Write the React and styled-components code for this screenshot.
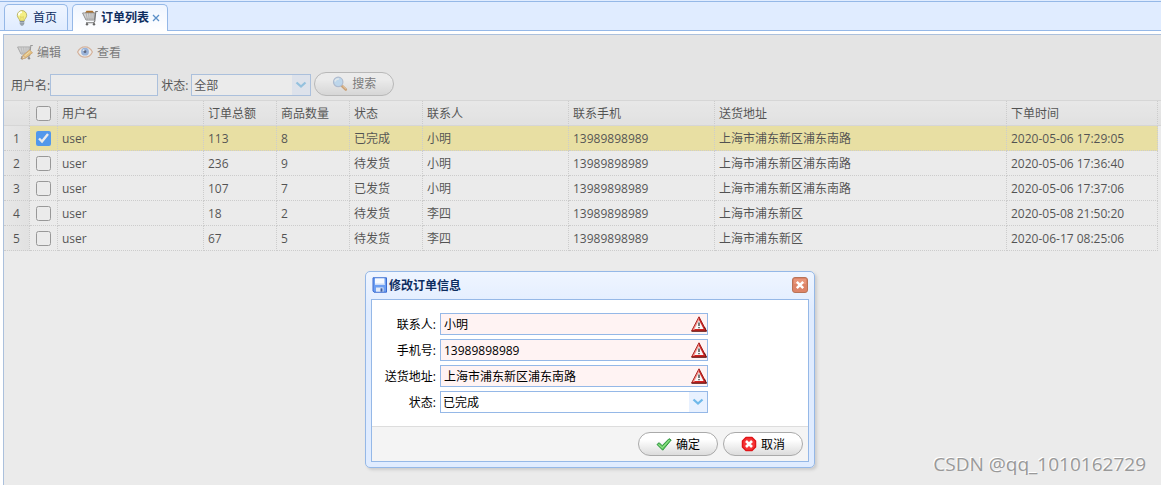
import { useState } from "react";
import styled, { createGlobalStyle, css } from "styled-components";

const orders = [
  { id: 1, user: "user", total: 113, count: 8, status: "已完成", contact: "小明", phone: "13989898989", address: "上海市浦东新区浦东南路", time: "2020-05-06 17:29:05" },
  { id: 2, user: "user", total: 236, count: 9, status: "待发货", contact: "小明", phone: "13989898989", address: "上海市浦东新区浦东南路", time: "2020-05-06 17:36:40" },
  { id: 3, user: "user", total: 107, count: 7, status: "已发货", contact: "小明", phone: "13989898989", address: "上海市浦东新区浦东南路", time: "2020-05-06 17:37:06" },
  { id: 4, user: "user", total: 18, count: 2, status: "待发货", contact: "李四", phone: "13989898989", address: "上海市浦东新区", time: "2020-05-08 21:50:20" },
  { id: 5, user: "user", total: 67, count: 5, status: "待发货", contact: "李四", phone: "13989898989", address: "上海市浦东新区", time: "2020-06-17 08:25:06" },
];

const columns = [
  { key: "user", title: "用户名", width: 146 },
  { key: "total", title: "订单总额", width: 73 },
  { key: "count", title: "商品数量", width: 73 },
  { key: "status", title: "状态", width: 73 },
  { key: "contact", title: "联系人", width: 146 },
  { key: "phone", title: "联系手机", width: 146 },
  { key: "address", title: "送货地址", width: 292 },
  { key: "time", title: "下单时间", width: 151 },
];

const statuses = ["待发货", "已发货", "已完成"];

const BulbIcon = () => (
  <Icon viewBox="0 0 16 16">
    <path d="M8 .6a4.700 4.700 0 0 0-4.700 4.700c0 2.300 2.200 3.500 2.500 5.700h4.400c.3-2.200 2.500-3.400 2.500-5.700A4.700 4.700 0 0 0 8 .6z" fill="#f4ef84" stroke="#b3ae62" strokeWidth=".9" />
    <path d="M4.800 5.500C4.800 3.500 6 2.200 8 2.200" fill="none" stroke="#fffff0" strokeWidth="1.800" />
    <path d="M7 10.500 6.600 6.500 8 7.500l1.400-1L9 10.500" fill="none" stroke="#d6c64f" strokeWidth=".6" />
    <path d="M5.800 11h4.400v3L9 15.600H7L5.800 14z" fill="#75828e" />
    <path d="M5.800 12.300h4.400M5.800 14h4" stroke="#d9e0e6" strokeWidth=".7" />
  </Icon>
);

const CartShape = () => (
  <>
    <path d="M.6 3h12.400l-.6 7H4z" fill="#eee" stroke="#8c8c8c" />
    <path d="M1.500 5h11M2.500 7h10M3.300 8.700h9M4 3l1.500 7M6.500 3l.8 7M9 3v7M11.200 3l-.3 7" fill="none" stroke="#a0a0a0" strokeWidth=".7" />
    <path d="M15.800 1.500h-2l-1 9.500-1 1.700H4" fill="none" stroke="#777" strokeWidth="1.100" />
    <circle cx="5" cy="14.200" r="1.200" fill="#666" />
    <circle cx="12" cy="14.200" r="1.200" fill="#666" />
  </>
);

const CartIcon = () => (
  <Icon viewBox="0 0 16 16">
    <path d="M4.500.8h6l2 2.200H3z" fill="#ad722e" />
    <CartShape />
  </Icon>
);

const CartEditIcon = () => (
  <Icon viewBox="0 0 16 16">
    <CartShape />
    <path d="m5 15 1-3.700L12.500 6 15.500 8.700 8.700 14z" fill="#f6b94d" stroke="#bd7a26" strokeWidth=".7" />
    <path d="m7.500 12 6-5" stroke="#ffe79c" />
    <path d="m5 15 1-3.500 2.500 2.400z" fill="#f7dfba" stroke="#b26c17" strokeWidth=".5" />
  </Icon>
);

const EyeIcon = () => (
  <Icon viewBox="0 0 16 16">
    <path d="M.6 8C2.500 4 5 2.800 8 2.800S13.500 4 15.400 8C13.500 12 11 13.200 8 13.200S2.500 12 .6 8z" fill="#fff" stroke="#dba27c" strokeWidth="1.200" />
    <circle cx="8" cy="7.700" r="3.900" fill="#78a2e2" />
    <circle cx="8" cy="7.700" r="1.400" fill="#16284e" />
    <circle cx="6.600" cy="6.200" r=".9" fill="#e5f2ff" />
  </Icon>
);

const SearchIcon = () => (
  <Icon viewBox="0 0 16 16">
    <path d="m9.800 9.800 4 3.700" stroke="#c98744" strokeWidth="2.600" strokeLinecap="round" />
    <path d="m10.500 9.800 3.400 3.200" stroke="#f5c480" />
    <circle cx="6.200" cy="5.900" r="4.700" fill="#b2ddff" stroke="#9aafd0" strokeWidth="1.200" />
    <path d="M3 5.500c.5-2 2-2.800 4-2.500" stroke="#eff9ff" strokeWidth="1.500" fill="none" />
  </Icon>
);

const SaveIcon = () => (
  <Icon viewBox="0 0 16 16">
    <path d="M1 .8h13.500v14.400H2L1 14z" fill="#6d9ff2" stroke="#3b6bcf" />
    <path d="M3 1.300h9.500V8H3z" fill="#f6faff" />
    <path d="M3 6.500h9.500V8H3z" fill="#cbdcf8" />
    <path d="M4 10.500h7.500v4.200H4z" fill="#e4ebf7" />
    <path d="M8.500 11.300h2v3.400h-2z" fill="#3d5ca0" />
  </Icon>
);

const CloseIcon = () => (
  <Icon viewBox="0 0 16 16">
    <rect x=".5" y=".5" width="15" height="15" rx="2.500" fill="#dd8468" stroke="#b87357" />
    <path d="M2 2h12v5H2z" fill="#e8967a" />
    <path d="m4.800 4.800 6.400 6.400M11.200 4.800l-6.400 6.400" stroke="#fff" strokeWidth="2.500" />
  </Icon>
);

const WarningIcon = () => (
  <Icon viewBox="0 0 16 16">
    <path d="M8 .8 15.400 15H.6z" fill="#cf2320" stroke="#a3201d" strokeLinejoin="round" />
    <path d="M.6 15.300h14.800L13.500 11" fill="none" stroke="#5f1a18" strokeWidth=".9" />
    <path d="M8 1.500 1.600 14h1.800L8 4.500z" fill="#f08e88" />
    <path d="M8 4 12.600 13H3.400z" fill="#f8f8f8" />
    <path d="M8 6.500v3.500M8 11v1.300" stroke="#333" strokeWidth="1.300" />
  </Icon>
);

const OkIcon = () => (
  <Icon viewBox="0 0 16 16">
    <path d="m1 8.500 2.200-1.800 3 3L13 2.700l2.200 1.300-8.500 10.200z" fill="#65cb60" stroke="#28913c" strokeLinejoin="round" />
    <path d="m2.500 8.500 3.800 3.300L13.500 4" fill="none" stroke="#a3e99c" strokeWidth=".8" />
  </Icon>
);

const CancelIcon = () => (
  <Icon viewBox="0 0 16 16">
    <path d="M5 1.500h6L14.500 5v6L11 14.500H5L1.500 11V5z" fill="#f63436" stroke="#e01418" strokeWidth="1.500" strokeLinejoin="round" />
    <path d="m5 5 6 6M11 5l-6 6" stroke="#fff" strokeWidth="2.600" />
  </Icon>
);

const Combo = ({ id, width, value, onChange, options }) => (
  <ComboBox $width={width}>
    <ComboSelect id={id} value={value} onChange={(e) => onChange(e.target.value)}>
      {options.map((o) => (
        <option key={o}>{o}</option>
      ))}
    </ComboSelect>
    <ComboArrow>
      <svg width="12" height="8" viewBox="0 0 12 8">
        <path d="m1.500 1.500 4.500 4 4.500-4" fill="none" stroke="#6fb9ea" strokeWidth="2.300" />
      </svg>
    </ComboArrow>
  </ComboBox>
);

const OrderGrid = () => {
  const [checked, setChecked] = useState([1]);

  const toggle = (id) =>
    setChecked((prev) => (prev.includes(id) ? prev.filter((x) => x !== id) : [...prev, id]));

  const toggleAll = (e) => setChecked(e.target.checked ? orders.map((o) => o.id) : []);

  return (
    <GridView>
      <Table>
        <colgroup>
          <Col $width={26} />
          <Col $width={28} />
          {columns.map((c) => (
            <Col key={c.key} $width={c.width} />
          ))}
        </colgroup>
        <thead>
          <tr>
            <HeadCell />
            <HeadCell $check>
              <Check
                type="checkbox"
                aria-label="全选"
                checked={checked.length === orders.length}
                onChange={toggleAll}
              />
            </HeadCell>
            {columns.map((c) => (
              <HeadCell key={c.key}>{c.title}</HeadCell>
            ))}
          </tr>
        </thead>
        <tbody>
          {orders.map((o) => (
            <Row key={o.id} $selected={checked.includes(o.id)}>
              <NumberCell>{o.id}</NumberCell>
              <Cell $check>
                <Check
                  type="checkbox"
                  aria-label={`选择第${o.id}行`}
                  checked={checked.includes(o.id)}
                  onChange={() => toggle(o.id)}
                />
              </Cell>
              {columns.map((c) => (
                <Cell key={c.key}>{o[c.key]}</Cell>
              ))}
            </Row>
          ))}
        </tbody>
      </Table>
    </GridView>
  );
};

const EditDialog = () => {
  const [form, setForm] = useState({
    contact: "小明",
    phone: "13989898989",
    address: "上海市浦东新区浦东南路",
    status: "已完成",
  });

  const set = (key) => (value) => setForm({ ...form, [key]: value });

  const fields = [
    { key: "contact", label: "联系人:" },
    { key: "phone", label: "手机号:" },
    { key: "address", label: "送货地址:" },
  ];

  return (
    <Dialog role="dialog" aria-labelledby="dialog-title">
      <DialogHeader>
        <SaveIcon />
        <DialogTitle id="dialog-title">修改订单信息</DialogTitle>
        <IconButton type="button" aria-label="关闭">
          <CloseIcon />
        </IconButton>
      </DialogHeader>
      <DialogBody>
        <Form>
          {fields.map((f) => (
            <FormRow key={f.key}>
              <FormLabel htmlFor={f.key}>{f.label}</FormLabel>
              <InvalidBox>
                <BareInput id={f.key} value={form[f.key]} onChange={(e) => set(f.key)(e.target.value)} />
                <WarningIcon />
              </InvalidBox>
            </FormRow>
          ))}
          <FormRow>
            <FormLabel htmlFor="status">状态:</FormLabel>
            <Combo id="status" width={268} value={form.status} onChange={set("status")} options={statuses} />
          </FormRow>
        </Form>
        <DialogButtons>
          <PillButton type="button">
            <OkIcon />
            <Caption>确定</Caption>
          </PillButton>
          <PillButton type="button">
            <CancelIcon />
            <Caption>取消</Caption>
          </PillButton>
        </DialogButtons>
      </DialogBody>
    </Dialog>
  );
};

const App = () => {
  const [name, setName] = useState("");
  const [status, setStatus] = useState("全部");

  return (
    <>
      <GlobalStyle />
      <Page>
        <Tabs>
          <Tab type="button">
            <BulbIcon />
            首页
          </Tab>
          <Tab type="button" $active>
            <CartIcon />
            订单列表
            <TabClose viewBox="0 0 8 8">
              <path d="m1 1 6 6M7 1 1 7" stroke="#5b8fc7" strokeWidth="1.300" />
            </TabClose>
          </Tab>
        </Tabs>
        <Panel>
          <Toolbar>
            <Actions>
              <LinkButton type="button">
                <CartEditIcon />
                <Caption>编辑</Caption>
              </LinkButton>
              <LinkButton type="button">
                <EyeIcon />
                <Caption>查看</Caption>
              </LinkButton>
            </Actions>
            <SearchBar>
              <SearchField>
                <SearchLabel htmlFor="search-name">用户名:</SearchLabel>
                <TextInput id="search-name" value={name} onChange={(e) => setName(e.target.value)} />
              </SearchField>
              <SearchField>
                <SearchLabel htmlFor="search-status">状态:</SearchLabel>
                <Combo id="search-status" width={120} value={status} onChange={setStatus} options={["全部", ...statuses]} />
              </SearchField>
              <PillButton type="button" $muted>
                <SearchIcon />
                搜索
              </PillButton>
            </SearchBar>
          </Toolbar>
          <OrderGrid />
          <Mask />
        </Panel>
        <EditDialog />
        <Watermark>CSDN @qq_1010162729</Watermark>
      </Page>
    </>
  );
};

const GlobalStyle = createGlobalStyle`
  * {
    box-sizing: border-box;
  }
  body {
    margin: 0;
    background: #fff;
  }
  body, button, input, select {
    font-family: "Open Sans", "Noto Sans CJK SC", sans-serif;
    font-size: 12px;
    line-height: 16px;
  }
`;

const Page = styled.div`
  position: relative;
  display: flex;
  flex-direction: column;
  min-height: 100vh;
  overflow: hidden;
`;

const Icon = styled.svg`
  flex: none;
  width: 16px;
  height: 16px;
`;

const Caption = styled.span`
  padding-top: 2px;
`;

const Tabs = styled.div`
  display: flex;
  align-items: flex-end;
  gap: 4px;
  height: 31px;
  padding: 0 4px;
  border-bottom: 1px solid #95b8e7;
  background: linear-gradient(#e0ecff 1px, #95b8e7 1px, #95b8e7 2px, #e0ecff 2px);
`;

const Tab = styled.button`
  display: flex;
  align-items: center;
  gap: 3px;
  height: 26px;
  padding: 0 10px 0 9px;
  border: 1px solid #95b8e7;
  border-bottom: 0;
  border-radius: 5px 5px 0 0;
  background: linear-gradient(#eff5ff, #e0ecff);
  color: #0e2d5f;
  ${({ $active }) =>
    $active &&
    css`
      height: 27px;
      margin-bottom: -1px;
      padding-right: 7px;
      background: linear-gradient(#eff5ff, #fff);
      font-weight: bold;
    `}
`;

const TabClose = styled.svg`
  width: 8px;
  height: 8px;
`;

const Panel = styled.div`
  position: relative;
  flex: 1;
  margin: 3px 0 0 3px;
  border: solid #95b8e7;
  border-width: 1px 0 0 1px;
`;

const Mask = styled.div`
  position: absolute;
  inset: -1px 0 0 -1px;
  background: #ccc;
  opacity: 0.4;
`;

const Toolbar = styled.div`
  display: flex;
  flex-direction: column;
  gap: 7px;
  padding: 4px 5px;
  border-bottom: 1px solid #ddd;
  background: #f4f4f4;
`;

const Actions = styled.div`
  display: flex;
`;

const LinkButton = styled.button`
  display: flex;
  align-items: center;
  gap: 4px;
  height: 26px;
  padding: 0 8px;
  border: 0;
  background: none;
  color: #444;
`;

const SearchBar = styled.div`
  display: flex;
  align-items: flex-end;
  gap: 3px;
  padding-left: 2px;
`;

const SearchField = styled.div`
  display: flex;
  align-items: center;
`;

const SearchLabel = styled.label`
  min-width: 30px;
  padding-top: 2px;
`;

const TextInput = styled.input`
  width: 108px;
  height: 22px;
  padding: 2px 4px 0;
  border: 1px solid #95b8e7;
  background: #fff;
`;

const ComboBox = styled.div`
  position: relative;
  width: ${({ $width }) => $width}px;
  height: 22px;
  border: 1px solid #95b8e7;
  background: #fff;
`;

const ComboSelect = styled.select`
  appearance: none;
  width: 100%;
  height: 20px;
  padding: 2px 20px 0 2px;
  border: 0;
  background: none;
  color: #000;
`;

const ComboArrow = styled.span`
  position: absolute;
  top: 0;
  right: 0;
  display: flex;
  align-items: center;
  justify-content: center;
  width: 18px;
  height: 20px;
  background: #e8f1ff;
  pointer-events: none;
`;

const PillButton = styled.button`
  display: flex;
  align-items: center;
  justify-content: center;
  gap: 4px;
  width: 80px;
  height: 24px;
  padding: 0;
  border: 1px solid #aaa;
  border-radius: 12px;
  background: linear-gradient(#fff 30%, #dcdcdc);
  color: ${({ $muted }) => ($muted ? "#444" : "#000")};
`;

const GridView = styled.div`
  padding-right: 3px;
  background: linear-gradient(#f9f9f9, #efefef 24px, #ddd 24px, #ddd 25px, #fff 25px);
`;

const Table = styled.table`
  width: 100%;
  table-layout: fixed;
  border-collapse: separate;
  border-spacing: 0;
`;

const Col = styled.col`
  width: ${({ $width }) => $width}px;
`;

const HeadCell = styled.th`
  height: 25px;
  padding: ${({ $check }) => ($check ? "0" : "2px 4px 0")};
  border-right: 1px dotted #ccc;
  border-bottom: 1px solid #ddd;
  font-weight: normal;
  text-align: left;
`;

const Cell = styled.td`
  height: 25px;
  padding: ${({ $check }) => ($check ? "0" : "2px 4px 0")};
  border-right: 1px dotted #ccc;
  border-bottom: 1px dotted #ccc;
  text-align: left;
  white-space: nowrap;
`;

const NumberCell = styled(Cell)`
  padding: 2px 0 0;
  background: linear-gradient(to right, #f9f9f9, #efefef);
  text-align: center;
`;

const Row = styled.tr`
  background: ${({ $selected }) => ($selected ? "#fbec88" : "#fff")};
`;

const Check = styled.input`
  display: block;
  width: 15px;
  height: 15px;
  margin: 0 auto;
`;

const Dialog = styled.div`
  position: absolute;
  top: 271px;
  left: 365px;
  width: 450px;
  padding: 5px;
  border: 1px solid #95b8e7;
  border-radius: 5px;
  background: linear-gradient(#eff5ff, #e0ecff 20%);
  box-shadow: 2px 2px 3px #ccc;
`;

const DialogHeader = styled.div`
  display: flex;
  align-items: center;
  gap: 1px;
  padding: 0 1px 6px;
`;

const DialogTitle = styled.div`
  flex: 1;
  padding-top: 2px;
  color: #0e2d5f;
  font-weight: bold;
  line-height: 14px;
`;

const IconButton = styled.button`
  display: flex;
  padding: 0;
  border: 0;
  background: none;
`;

const DialogBody = styled.div`
  border: 1px solid #95b8e7;
  background: #fff;
`;

const Form = styled.form`
  display: flex;
  flex-direction: column;
  gap: 4px;
  padding: 13px 0;
`;

const FormRow = styled.div`
  display: flex;
  align-items: center;
  gap: 4px;
`;

const FormLabel = styled.label`
  width: 64px;
  padding-top: 2px;
  text-align: right;
`;

const InvalidBox = styled.div`
  display: flex;
  align-items: center;
  width: 268px;
  height: 22px;
  border: 1px solid #95b8e7;
  background: #fff3f3;
`;

const BareInput = styled.input`
  flex: 1;
  min-width: 0;
  padding: 2px 3px 0;
  border: 0;
  background: none;
  color: #000;
`;

const DialogButtons = styled.div`
  display: flex;
  justify-content: flex-end;
  gap: 5px;
  padding: 5px;
  border-top: 1px solid #ddd;
  background: #f4f4f4;
`;

const Watermark = styled.div`
  position: absolute;
  right: 15px;
  bottom: 8px;
  color: #999;
  font-size: 19px;
  line-height: 26px;
  text-shadow: -1px -1px 0 #fff;
`;

export default App;
